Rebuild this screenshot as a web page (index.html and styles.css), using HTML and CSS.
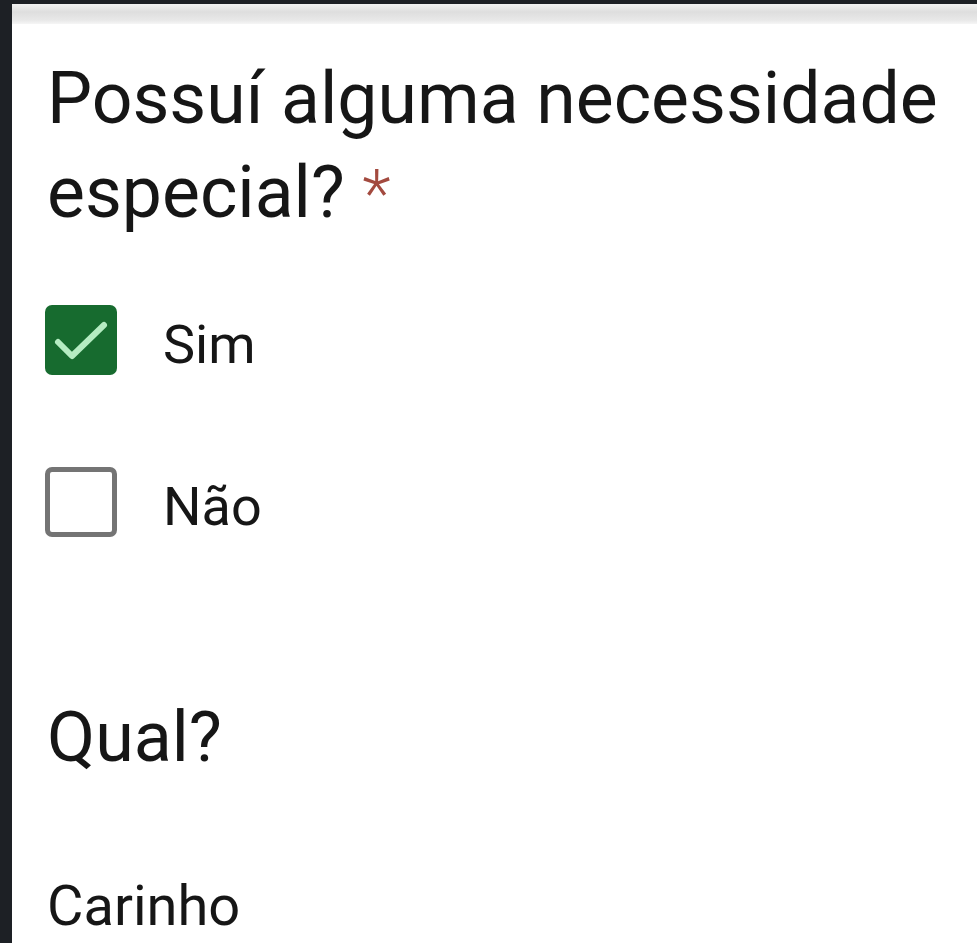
FILE: index.html
```html
<!DOCTYPE html>
<html lang="pt">
<head>
<meta charset="utf-8">
<link rel="stylesheet" href="styles.css">
</head>
<body>
<div class="frame">
  <div class="topbar"></div>
  <div class="content">
    <h1 class="question">Possuí alguma necessidade especial? <span class="req">*</span></h1>
    <div class="options">
      <div class="option">
        <span class="box checked">
          <svg viewBox="0 0 72 70" width="72" height="70"><path d="M13 37 L27 51 L59 20" fill="none" stroke="#b5ecc2" stroke-width="6" stroke-linecap="round" stroke-linejoin="round"/></svg>
        </span>
        <span class="label">Sim</span>
      </div>
      <div class="option">
        <span class="box"></span>
        <span class="label">Não</span>
      </div>
    </div>
    <h2 class="sub">Qual?</h2>
    <div class="answer">Carinho</div>
  </div>
</div>
</body>
</html>
```
FILE: styles.css
```css
html, body {
  margin: 0;
  padding: 0;
  background: #1d2025;
  height: 100%;
  overflow: hidden;
}
.frame {
  margin: 4px 0 0 12px;
  background: #fff;
  height: 939px;
  font-family: Roboto, "Noto Sans", sans-serif;
  color: #161616;
}
.topbar {
  height: 20px;
  background: linear-gradient(#f2f2f2, #dedede 40%, #e8e8e8 80%, #f6f6f6);
}
.content {
  padding: 28px 0 0 35px;
}
.question {
  margin: 0;
  font-size: 71.5px;
  font-weight: 400;
  line-height: 94px;
  width: 935px;
}
.req {
  color: #a34a3f;
  font-weight: 300;
  font-size: 66px;
}
.options {
  margin-top: 63px;
  display: flex;
  flex-direction: column;
  gap: 92px;
}
.option {
  display: flex;
  align-items: flex-start;
  gap: 46px;
  height: 70px;
}
.box {
  flex: none;
  width: 72px;
  height: 70px;
  box-sizing: border-box;
  border: 5px solid #747474;
  border-radius: 7px;
  margin-left: -2px;
  display: block;
}
.box.checked {
  border: none;
  background: #176b2f;
}
.box svg { display: block; }
.label {
  font-size: 54px;
  line-height: 70px;
  margin-top: 5px;
}
.sub {
  margin: 160px 0 0 0;
  font-size: 70px;
  font-weight: 400;
  line-height: 80px;
}
.answer {
  margin-top: 99px;
  font-size: 56px;
  line-height: 60px;
}
```
